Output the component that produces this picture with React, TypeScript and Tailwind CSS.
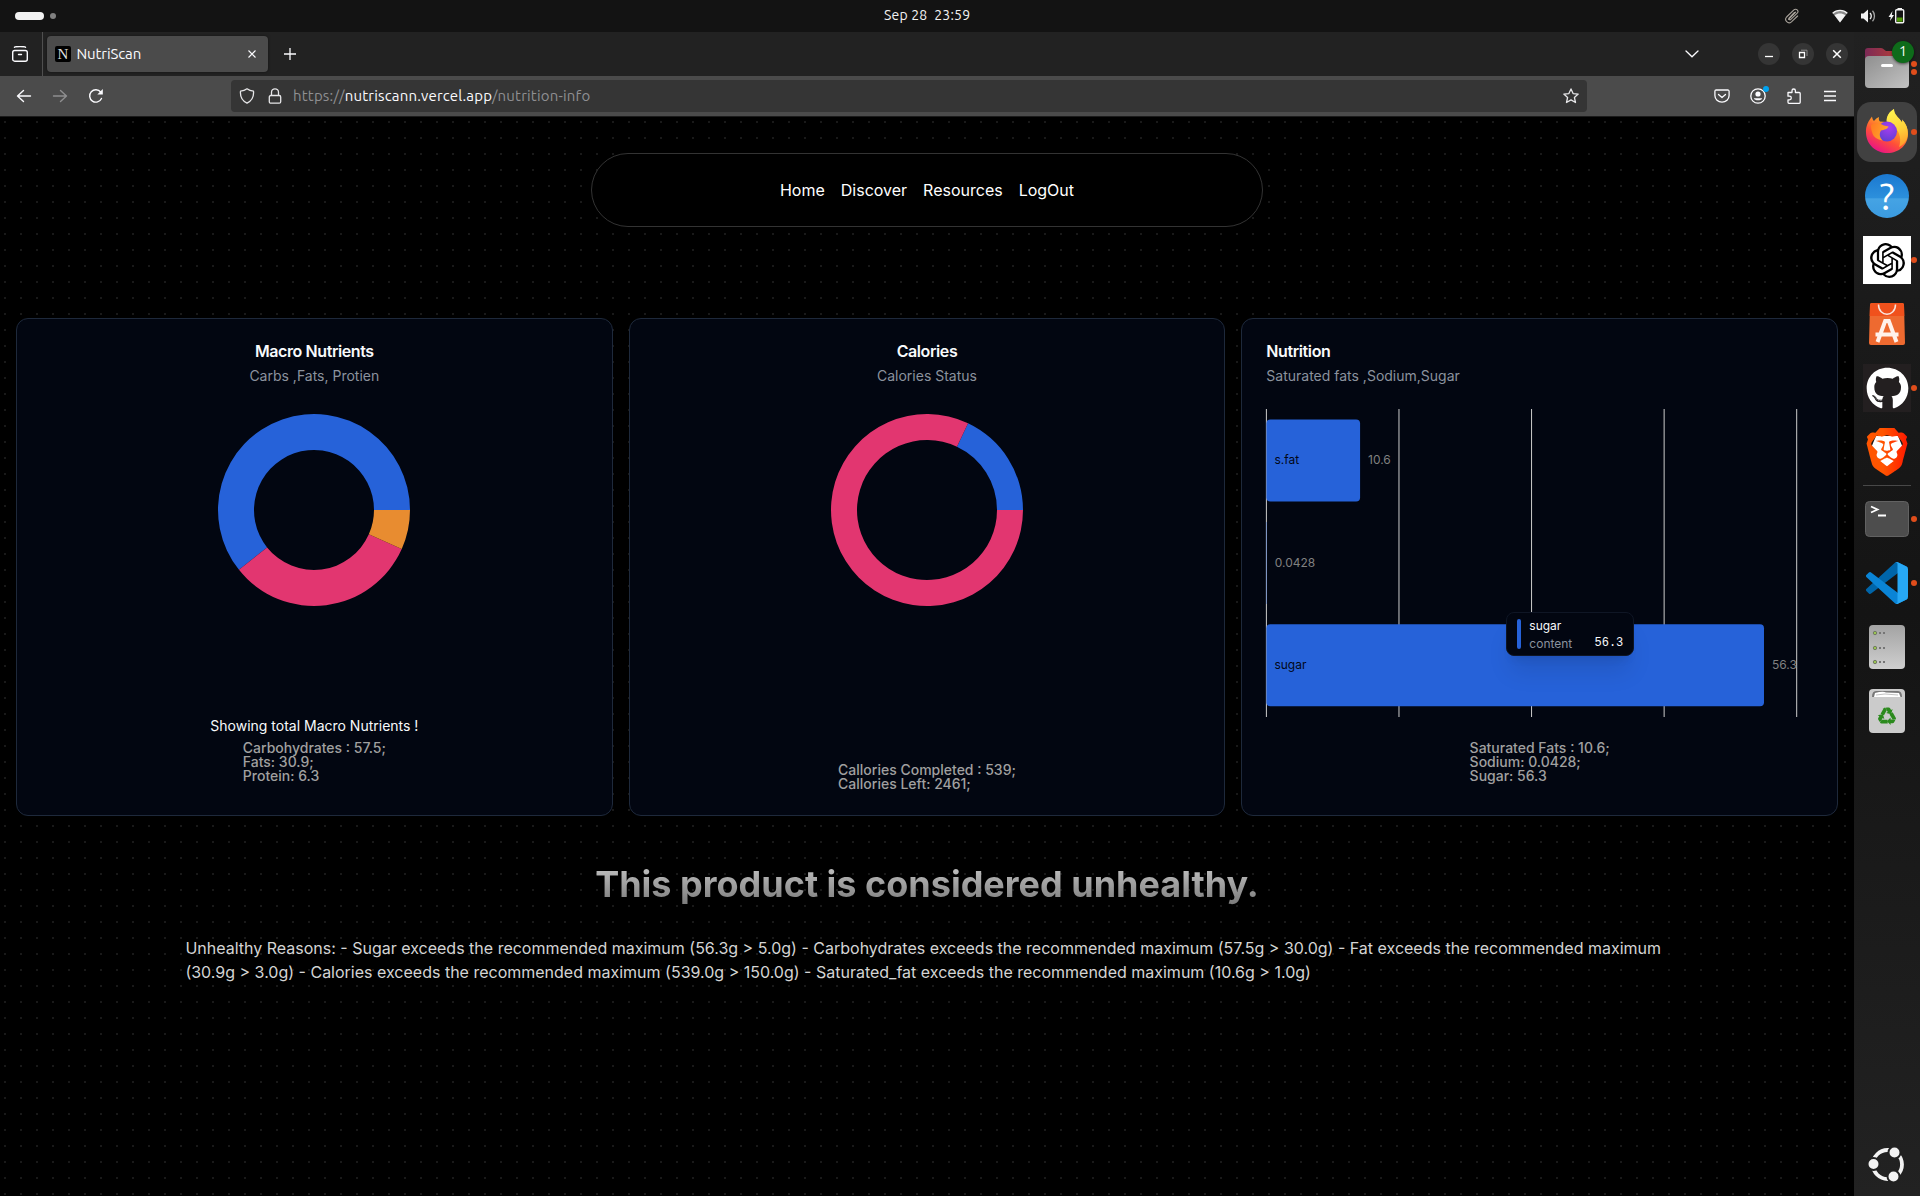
import type { ReactNode } from "react";
import { SiBrave, SiOpenai } from "react-icons/si";
import { FaGithub } from "react-icons/fa";

const UI = "font-['Ubuntu','Noto_Sans',sans-serif]";

function TopBar() {
  return (
    <header className={`relative flex h-8 shrink-0 items-center bg-[#131313] pl-[15px] text-[#f2f2f2] ${UI}`}>
      <span className="h-2 w-[29px] rounded-full bg-[#f2f2f2]" />
      <span className="ml-1.5 size-1.5 rounded-full bg-[#808080]" />
      <span className="ml-[828px] w-[90px] whitespace-pre text-[14px] leading-8 tracking-[0.2px] -translate-y-px">Sep 28  23:59</span>
      <div className="ml-auto flex items-center pr-[15px]">
        <svg width="16" height="16" viewBox="0 0 16 16" fill="none" stroke="#a9a39b" strokeWidth="1.100" strokeLinecap="round" className="mr-8">
          <path d="M10.500 4.500 5.200 9.800a1.100 1.100 0 0 0 1.600 1.600l6.400-6.200a2.300 2.300 0 0 0-3.300-3.300L2.600 9a3.400 3.400 0 0 0 4.800 4.800L13.600 8" />
          <path d="M4.600 11.400 11.600 4.200" />
        </svg>
        <svg width="16" height="16" viewBox="0 0 16 16" className="mr-3">
          <path d="M8 14.500.5 5C4.500 1.300 11.500 1.300 15.500 5Z" fill="#8a8a8a" />
          <path d="M.7 5.200C4.600 1.400 11.400 1.400 15.300 5.200" fill="none" stroke="#f2f2f2" strokeWidth="1.200" />
          <path d="M8 14.500 2.600 7.300C5.500 5 10.500 5 13.400 7.300Z" fill="#f2f2f2" />
        </svg>
        <svg width="16" height="16" viewBox="0 0 16 16" className="mr-3" fill="none" stroke="#f2f2f2" strokeWidth="1.300">
          <path d="M1 5.500h2.500L8 1.500v13L3.500 10.500H1Z" fill="#f2f2f2" stroke="none" />
          <path d="M10 5a4.200 4.200 0 0 1 0 6" />
          <path d="M12.500 2.800a7.800 7.800 0 0 1 0 10.400" stroke="#a5a5a5" />
        </svg>
        <svg width="17" height="16" viewBox="0 0 17 16">
          <path d="M4.500 3 .5 9h2.300L2 13l4-6H3.800Z" fill="#f2f2f2" />
          <rect x="7.700" y="1.700" width="8" height="13" rx="1" fill="none" stroke="#f2f2f2" strokeWidth="1.400" />
          <path d="M9.500 0h4.500v2H9.500Z" fill="#f2f2f2" />
          <path d="M9 9.500h5.500v4.200H9Z" fill="#4e9a06" />
        </svg>
      </div>
    </header>
  );
}

function WindowButton({ children }: { children: ReactNode }) {
  return (
    <span className="flex size-[22px] items-center justify-center rounded-full bg-[#353535]">
      <svg width="14" height="14" viewBox="0 0 14 14" fill="none" stroke="#fff" strokeWidth="1.300">
        {children}
      </svg>
    </span>
  );
}

function TabStrip() {
  return (
    <div className={`flex h-11 shrink-0 items-center bg-[#222222] text-[#fbfbfe] ${UI}`}>
      <svg width="16" height="16" viewBox="0 0 16 16" fill="none" stroke="#fbfbfe" strokeWidth="1.400" strokeLinecap="round" className="ml-3">
        <rect x=".7" y="4.500" width="14.600" height="10.700" rx="2" />
        <path d="M2.500 1.200C3.500.3 12.500.3 13.500 1.200M6.500 8.500h3" />
      </svg>
      <div className="ml-3.5 h-11 w-px bg-[#4f4f4f]" />
      <div className="ml-1 flex h-9 w-[221px] items-center rounded bg-[#4b4b4b] pl-2 shadow-[0_0_3px_rgba(0,0,0,0.5)]">
        <span className="flex size-4 items-center justify-center rounded-[2px] bg-black font-['Liberation_Serif',serif] text-[15px] leading-4 text-[#dddddd]">N</span>
        <span className="ml-[5.500px] flex-1 text-[15px] leading-5 tracking-[-0.1px]">NutriScan</span>
        <svg width="8" height="8" viewBox="0 0 8 8" stroke="#fbfbfe" strokeWidth="1.100" className="mr-3">
          <path d="M.5.5l7 7M7.500.5l-7 7" />
        </svg>
      </div>
      <svg width="12" height="12" viewBox="0 0 12 12" stroke="#fbfbfe" strokeWidth="1.300" className="ml-[15.500px]">
        <path d="M6 0v12M0 6h12" />
      </svg>
      <svg width="14" height="8" viewBox="0 0 14 8" fill="none" stroke="#fbfbfe" strokeWidth="1.300" strokeLinecap="round" className="ml-auto mr-[59px]">
        <path d="M1 1l6 5.800L13 1" />
      </svg>
      <div className="flex gap-3 pr-1.5">
        <WindowButton><path d="M3 9.500h8" /></WindowButton>
        <WindowButton>
          <path d="M3.500 5.500h5v5h-5Z" />
          <path d="M5 3.200h6V9" stroke="#8a8a8a" strokeWidth="1" />
        </WindowButton>
        <WindowButton><path d="M3.200 3.200l7.600 7.600M10.800 3.200l-7.600 7.600" strokeWidth="1.500" /></WindowButton>
      </div>
    </div>
  );
}

function AddressBar() {
  return (
    <div className={`flex h-[41px] shrink-0 items-center border-b border-[#1b1b1b] bg-[#4b4b4b] text-[#fbfbfe] ${UI}`}>
      <div className="flex w-[231px] items-center gap-5 pl-4">
        <svg width="16" height="16" viewBox="0 0 16 16" fill="none" stroke="#fbfbfe" strokeWidth="1.400" strokeLinecap="round" strokeLinejoin="round">
          <path d="M14.500 8H1.500M7.500 2.500 1.500 8l6 5.500" />
        </svg>
        <svg width="16" height="16" viewBox="0 0 16 16" fill="none" stroke="#8f8f90" strokeWidth="1.400" strokeLinecap="round" strokeLinejoin="round">
          <path d="M1.500 8h13M8.500 2.500l6 5.500-6 5.500" />
        </svg>
        <svg width="16" height="16" viewBox="0 0 16 16" fill="none" stroke="#fbfbfe" strokeWidth="1.400" strokeLinecap="round">
          <path d="M13.500 10.500A6.200 6.200 0 1 1 12.700 4" />
          <path d="M14.800 1v5.500H9.300Z" fill="#fbfbfe" stroke="none" />
        </svg>
      </div>
      <div className="flex h-8 w-[1356px] items-center rounded bg-[#353535] px-2">
        <svg width="16" height="16" viewBox="0 0 16 16" fill="none" stroke="#e6e6e8" strokeWidth="1.300" strokeLinejoin="round">
          <path d="M8 .8C6 2.300 3.500 3 1.500 3.200 1 8.500 3.500 13 8 15.200c4.500-2.200 7-6.700 6.500-12C12.500 3 10 2.300 8 .8Z" />
        </svg>
        <svg width="16" height="16" viewBox="0 0 16 16" fill="none" stroke="#e6e6e8" strokeWidth="1.300" className="ml-3">
          <rect x="2.300" y="7.500" width="11.400" height="7.700" rx="1.500" />
          <path d="M4.500 7.500V4.300a3.500 3.500 0 0 1 7 0v3.200" />
        </svg>
        <span className="ml-2.5 text-[15px] leading-5 tracking-[0.18px] text-[#8f8f92]">
          https://<span className="text-[#fbfbfe]">nutriscann.vercel.app</span>/nutrition-info
        </span>
        <svg width="16" height="16" viewBox="0 0 16 16" fill="none" stroke="#e6e6e8" strokeWidth="1.300" strokeLinejoin="round" className="ml-auto">
          <path d="M8 .9l2.100 4.700 5.100.5-3.800 3.400 1.100 5L8 11.900l-4.500 2.600 1.100-5L.8 6.100l5.100-.5Z" />
        </svg>
      </div>
      <div className="ml-auto flex items-center gap-5 pr-4">
        <svg width="16" height="16" viewBox="0 0 16 16" fill="none" stroke="#fbfbfe" strokeWidth="1.300" strokeLinecap="round" strokeLinejoin="round">
          <path d="M2.200 2h11.600a1.300 1.300 0 0 1 1.300 1.300V7.500a7.100 6.700 0 0 1-14.200 0V3.300A1.300 1.300 0 0 1 2.200 2ZM4.500 6.500 8 9.500l3.500-3" />
        </svg>
        <span className="relative">
          <svg width="16" height="16" viewBox="0 0 16 16" fill="none" stroke="#fbfbfe" strokeWidth="1.300">
            <circle cx="8" cy="8" r="7.200" />
            <circle cx="8" cy="6" r="2.600" fill="#fbfbfe" stroke="none" />
            <path d="M3.800 10.300h8.400C11.500 13 4.500 13 3.800 10.300Z" fill="#fbfbfe" stroke="none" />
          </svg>
          <span className="absolute -top-0.5 left-[13px] size-1.5 rounded-full bg-[#00a3f0]" />
        </span>
        <svg width="16" height="16" viewBox="0 0 16 16" fill="none" stroke="#fbfbfe" strokeWidth="1.300" strokeLinejoin="round">
          <path d="M2 4.500h4V2.700a1.700 1.700 0 0 1 3.400 0v1.800h3.800a1 1 0 0 1 1 1v8.800a1 1 0 0 1-1 1H3a1 1 0 0 1-1-1v-2.500h1.500a1.800 1.800 0 0 0 0-3.600H2Z" />
        </svg>
        <svg width="16" height="16" viewBox="0 0 16 16" stroke="#fbfbfe" strokeWidth="1.300">
          <path d="M2 3.500h12M2 8h12M2 12.500h12" />
        </svg>
      </div>
    </div>
  );
}

type Slice = { value: number; color: string };

function Donut({ slices, inner }: { slices: Slice[]; inner: number }) {
  const total = slices.reduce((sum, s) => sum + s.value, 0);
  const point = (r: number, a: number) => `${125 + r * Math.cos(a)} ${125 - r * Math.sin(a)}`;
  let angle = 0;
  return (
    <svg width="250" height="250" viewBox="0 0 250 250" className="mx-auto">
      {slices.map((s) => {
        const start = angle;
        angle += (s.value / total) * Math.PI * 2;
        const large = angle - start > Math.PI ? 1 : 0;
        return (
          <path
            key={s.color}
            fill={s.color}
            d={`M${point(96, start)}A96 96 0 ${large} 0 ${point(96, angle)}L${point(inner, angle)}A${inner} ${inner} 0 ${large} 1 ${point(inner, start)}Z`}
          />
        );
      })}
    </svg>
  );
}

function Card({ title, subtitle, left, children }: { title: string; subtitle: string; left?: boolean; children: ReactNode }) {
  return (
    <section className="flex h-[498px] flex-col rounded-xl border border-[#1e293b] bg-[#020611] p-6">
      <div className={left ? "" : "text-center"}>
        <h3 className="text-base leading-none font-semibold tracking-tight text-[#f8fafc]">{title}</h3>
        <p className="mt-[7px] -mb-px text-sm text-[#8b929e]">{subtitle}</p>
      </div>
      {children}
    </section>
  );
}

const BARS = [
  { name: "s.fat", value: 10.6, top: 10.4, baseline: 55 },
  { name: "", value: 0.0428, top: 113, baseline: 158 },
  { name: "sugar", value: 56.3, top: 215.2, baseline: 260 },
];

function NutritionChart() {
  const width = 530.3;
  return (
    <div className="relative mt-6">
      <svg width="546" height="308" viewBox="-0.400 0 546 308" className="overflow-visible font-['Inter',sans-serif] text-xs">
        {[0, 1, 2, 3, 4].map((i) => (
          <path key={i} d={`M${(width / 4) * i} 0v308`} stroke="#ccc" strokeWidth="1" />
        ))}
        {BARS.map((b) => {
          const w = (b.value / 60) * width;
          return (
            <g key={b.value}>
              <rect x="0" y={b.top} width={w} height="82" rx={w > 8 ? 4 : 0} fill="#2662d9" />
              <text x="8" y={b.baseline} fill="#020817">{b.name}</text>
              <text x={w + 8} y={b.baseline} fill="#808080">{b.value}</text>
            </g>
          );
        })}
      </svg>
      <div className="absolute top-[203px] left-[240px] flex h-11 w-32 gap-2 rounded-lg border border-[#0f1625] bg-[#020611] px-2.5 py-1.5 text-xs shadow-xl">
        <span className="w-1 rounded-[2px] bg-[#2662d9]" />
        <div className="flex flex-1 flex-col gap-1.5 pt-px leading-none">
          <span className="text-[#f8fafc]">sugar</span>
          <span className="flex justify-between text-[#8b929e]">
            content
            <span className="-mt-px font-['Liberation_Mono',monospace] text-[#f8fafc]">56.3</span>
          </span>
        </div>
      </div>
    </div>
  );
}

function FooterLines({ lines }: { lines: string[] }) {
  return (
    <div className="mx-auto w-fit text-sm leading-none font-medium text-[#a0a0a0]">
      {lines.map((l) => (
        <p key={l}>{l}</p>
      ))}
    </div>
  );
}

function Page() {
  return (
    <main className="min-h-0 flex-1 bg-black bg-[radial-gradient(circle_at_5px_5px,#191919_1.200px,transparent_1.300px)] bg-[size:16px_16px] pt-9 font-['Inter',sans-serif]">
      <nav className="mx-auto flex h-[74px] w-[672px] items-center justify-center gap-4 rounded-full border border-[#333333] bg-black text-base text-white">
        {["Home", "Discover", "Resources", "LogOut"].map((item) => (
          <a key={item}>{item}</a>
        ))}
      </nav>
      <div className="mt-[91px] grid grid-cols-3 gap-4 px-4">
        <Card title="Macro Nutrients" subtitle="Carbs ,Fats, Protien">
          <Donut
            inner={60}
            slices={[
              { value: 57.5, color: "#2662d9" },
              { value: 30.9, color: "#e23670" },
              { value: 6.3, color: "#e88c30" },
            ]}
          />
          <p className="mt-auto mb-2 text-center text-sm leading-none text-[#f8fafc]">Showing total Macro Nutrients !</p>
          <div className="mb-2">
            <FooterLines lines={["Carbohydrates : 57.5;", "Fats: 30.9;", "Protein: 6.3"]} />
          </div>
        </Card>
        <Card title="Calories" subtitle="Calories Status">
          <Donut
            inner={70}
            slices={[
              { value: 539, color: "#2662d9" },
              { value: 2461, color: "#e23670" },
            ]}
          />
          <div className="mt-auto">
            <FooterLines lines={["Callories Completed : 539;", "Callories Left: 2461;"]} />
          </div>
        </Card>
        <Card left title="Nutrition" subtitle="Saturated fats ,Sodium,Sugar">
          <NutritionChart />
          <div className="mt-auto mb-2">
            <FooterLines lines={["Saturated Fats : 10.6;", "Sodium: 0.0428;", "Sugar: 56.3"]} />
          </div>
        </Card>
      </div>
      <h1 className="mt-8 bg-gradient-to-b from-neutral-200 to-[#606060] bg-clip-text py-4 text-center text-4xl leading-10 font-bold text-transparent">
        This product is considered unhealthy.
      </h1>
      <p className="mt-4 ml-[185.400px] w-[1483px] text-base text-[#d4d4d4]">
        Unhealthy Reasons: - Sugar exceeds the recommended maximum (56.3g &gt; 5.0g) - Carbohydrates exceeds the recommended maximum (57.5g &gt; 30.0g) - Fat exceeds the recommended maximum
        <br />
        (30.9g &gt; 3.0g) - Calories exceeds the recommended maximum (539.0g &gt; 150.0g) - Saturated_fat exceeds the recommended maximum (10.6g &gt; 1.0g)
      </p>
    </main>
  );
}

function DockItem({ dots = 0, active, children }: { dots?: number; active?: boolean; children: ReactNode }) {
  return (
    <div className={`relative mx-[3px] flex h-[60px] items-center justify-center ${active ? "rounded-[14px] bg-[#414141]" : ""}`}>
      {children}
      <span className="absolute top-0 right-0 flex h-full flex-col items-center justify-center gap-0.5">
        {Array.from({ length: dots }, (_, i) => (
          <span key={i} className="size-1.5 rounded-full bg-[#e04d1b]" />
        ))}
      </span>
    </div>
  );
}

function FirefoxIcon() {
  return (
    <svg width="48" height="48" viewBox="0 0 48 48">
      <defs>
        <linearGradient id="foxBody" x1=".8" y1=".1" x2=".3" y2="1"><stop stopColor="#ffd43a" /><stop offset=".35" stopColor="#ff9a28" /><stop offset=".65" stopColor="#ff4f38" /><stop offset="1" stopColor="#e8108a" /></linearGradient>
        <linearGradient id="foxFlame" x1=".4" y1="0" x2=".6" y2="1"><stop stopColor="#fff44f" /><stop offset=".55" stopColor="#ffd23a" /><stop offset="1" stopColor="#ff9c2a" /></linearGradient>
        <radialGradient id="foxGlobe" cx=".6" cy=".3" r=".8"><stop stopColor="#a63df0" /><stop offset="1" stopColor="#5a3fcf" /></radialGradient>
        <linearGradient id="foxHead" x1="0" y1="0" x2="1" y2=".4"><stop stopColor="#ff7a22" /><stop offset="1" stopColor="#ffa62b" /></linearGradient>
      </defs>
      <path fill="url(#foxBody)" d="M3 25C2.500 18 5.500 13 9 8.500 9.300 10.800 10 12.300 11 13c1.500-2 3-3.200 5-4-.5 2 0 3.500 1 4.500L24 14C24 8 26 4 31 1c0 5 3 7 5.500 10 1.500 2 2 2.500 2.500 3.500.5-1 .3-2 0-3C43 15.500 45 20 45 26c0 11-9 19-20.500 19S3.500 37 3 25Z" />
      <path fill="url(#foxFlame)" d="M31 1c0 5 3 7 5.500 10 1.500 2 2 2.500 2.500 3.500.5-1 .3-2 0-3 5.500 6 7 13 4.500 20-2 4-4.500 6-7.500 7.500 2.500-7 1-14-3.500-19C29 16.500 24 16 23.500 13 23.700 8 26 4 31 1Z" />
      <circle cx="24" cy="23.500" r="10" fill="url(#foxGlobe)" />
      <path fill="url(#foxHead)" d="M8 17c4.500-2.500 10-1.500 13 .5l4.500 1c-.5 2.500-4.500 3.300-7.500 4-2 3-1.500 7 1.500 10-5-1-9-3.500-10-7C8.500 23 8 20.500 8 17Z" />
    </svg>
  );
}

function RecycleGlyph() {
  return (
    <g transform="translate(24 29.500)" fill="#2b8a1d">
      {[0, 120, 240].map((turn) => (
        <g key={turn} transform={`rotate(${turn})`}>
          <path d="M-6.400-2.800-3.300-8.200q.6-.9 1.600-.9L-.2-6.300-3-1.200Z" />
          <path d="M-.8-9.100h2.600q.8 0 1.300.8l1 1.800L5.600-7.400 4.200-2.300-.9-3.600l1.700-1L-1-7.600Z" />
        </g>
      ))}
    </g>
  );
}

function Dock() {
  return (
    <aside className="flex w-[66px] shrink-0 flex-col bg-gradient-to-b from-[#212121] via-[#141414] to-[#222222] pt-1.5">
      <div className="flex flex-col gap-1">
        <DockItem dots={2}>
          <svg width="48" height="48" viewBox="0 0 48 48">
            <defs>
              <linearGradient id="folder" x1="0" y1="0" x2="1" y2="1"><stop stopColor="#8f8f8f" /><stop offset="1" stopColor="#c2c2c2" /></linearGradient>
              <linearGradient id="folderBack" x1="0" y1="0" x2="1" y2="0"><stop stopColor="#7c2a56" /><stop offset="1" stopColor="#c8452f" /></linearGradient>
            </defs>
            <path d="M2 20V7q0-3 3-3h13q2 0 3 1.500L23 7h20q3 0 3 3v10Z" fill="url(#folderBack)" />
            <rect x="2" y="12" width="44" height="32" rx="4" fill="url(#folder)" />
            <rect x="18" y="20" width="12" height="3" rx="1.500" fill="#fff" />
          </svg>
          <span className="absolute top-[3px] right-[3px] flex size-[22px] items-center justify-center rounded-full bg-[#0e6b1a] pb-px font-['Ubuntu','Noto_Sans',sans-serif] text-[14px] text-white shadow-[0_1px_3px_rgba(0,0,0,0.6)]">1</span>
        </DockItem>
        <DockItem dots={1} active>
          <FirefoxIcon />
        </DockItem>
        <DockItem>
          <span className="flex size-[44px] items-center justify-center rounded-full bg-[linear-gradient(#1b78d0_0%,#2c90dc_55%,#45a3e4_56%,#3b9be0_100%)] font-['Ubuntu','Noto_Sans',sans-serif] text-[38px] leading-none text-white">?</span>
        </DockItem>
        <DockItem dots={1}>
          <span className="flex size-12 items-center justify-center bg-white text-black"><SiOpenai size={35} /></span>
        </DockItem>
        <DockItem>
          <svg width="48" height="48" viewBox="0 0 48 48">
            <path d="M9 3h30q2 0 2 2l1 38q0 2-2 2H8q-2 0-2-2L7 5q0-2 2-2Z" fill="#ee6a30" />
            <path d="M9 3h30q2 0 2 2l.3 11H6.700L7 5q0-2 2-2Z" fill="#f0511c" />
            <path d="M15.500 4.500c0 13 17 13 17 0" fill="none" stroke="#f8e6df" strokeWidth="1.500" />
            <path d="M14.500 42 22.200 21h3.600L33.500 42M12.500 34.500h23" fill="none" stroke="#fff1ea" strokeWidth="4" />
          </svg>
        </DockItem>
        <DockItem dots={1}>
          <span className="flex size-12 items-center justify-center bg-[#231f20] text-white"><FaGithub size={43} /></span>
        </DockItem>
        <DockItem>
          <svg width="48" height="48" viewBox="0 0 48 48">
            <defs>
              <linearGradient id="brave" x1="0" x2="1"><stop stopColor="#ff5500" /><stop offset=".4" stopColor="#ff5500" /><stop offset="1" stopColor="#ff1a00" /></linearGradient>
            </defs>
            <path d="M13 8h22l5 12-6 18-10 6-10-6-6-18Z" fill="#fff" />
            <SiBrave size={48} fill="url(#brave)" />
          </svg>
        </DockItem>
      </div>
      <div className="mx-[9px] mt-[3px] h-px bg-[#484848]" />
      <div className="mt-[3px] flex flex-col gap-1">
        <DockItem dots={1}>
          <svg width="48" height="48" viewBox="0 0 48 48">
            <rect x="2.500" y="6.500" width="43" height="35" rx="4" fill="#4d4d4d" stroke="#626262" />
            <path d="M8 11.500l6.500 3L8 17.500M15 20.500h8" fill="none" stroke="#fff" strokeWidth="1.800" />
          </svg>
        </DockItem>
        <DockItem dots={1}>
          <svg width="42" height="42" viewBox="0 0 100 100">
            <path fill="#0065a9" d="M96.461 10.796 75.857.876a6.230 6.230 0 0 0-7.107 1.207L1.299 63.583a4.167 4.167 0 0 0 .004 6.162l5.510 5.009a4.167 4.167 0 0 0 5.321.236l81.227-61.620c2.725-2.067 6.639-.124 6.639 3.297v-.240a6.250 6.250 0 0 0-3.539-5.631Z" />
            <path fill="#0a84d6" d="m96.461 89.204-20.604 9.920a6.230 6.230 0 0 1-7.107-1.207L1.299 36.417a4.167 4.167 0 0 1 .004-6.162l5.510-5.009a4.167 4.167 0 0 1 5.321-.236l81.227 61.620c2.725 2.067 6.639.124 6.639-3.297v.240a6.250 6.250 0 0 1-3.539 5.631Z" />
            <path fill="#27a8f5" d="M75.858 99.126a6.230 6.230 0 0 1-7.108-1.210C71.056 100.223 75 98.590 75 95.328V4.672c0-3.262-3.944-4.895-6.250-2.589a6.230 6.230 0 0 1 7.108-1.210l20.601 9.908A6.250 6.250 0 0 1 100 16.413v67.174a6.250 6.250 0 0 1-3.541 5.632Z" />
          </svg>
        </DockItem>
        <DockItem>
          <svg width="48" height="48" viewBox="0 0 48 48">
            <defs>
              <linearGradient id="metal" x1="0" y1="0" x2="0" y2="1"><stop stopColor="#a3a3a3" /><stop offset="1" stopColor="#cfcfcf" /></linearGradient>
            </defs>
            <rect x="6" y="2" width="36" height="44" rx="4" fill="url(#metal)" />
            {[10, 25, 39].map((y) => (
              <g key={y} fill="#757575">
                <circle cx="12" cy={y} r="1.700" fill="#9bc552" stroke="#6c7460" strokeWidth=".9" />
                <rect x="16" y={y - 1} width="2" height="2" />
                <rect x="20" y={y - 1} width="2" height="2" />
              </g>
            ))}
          </svg>
        </DockItem>
        <DockItem>
          <svg width="48" height="48" viewBox="0 0 48 48">
            <rect x="6" y="2" width="36" height="44" rx="4" fill="#cbcbcb" />
            <path d="M9 10q0-6 4-6h22q4 0 4 6Z" fill="#777" />
            <path d="M11 10l1-4q8-2 11-.5L36 6l1.500 4Z" fill="#fff" />
            <path d="M13 8l9-1 13 1" fill="none" stroke="#999" strokeWidth=".6" />
            <RecycleGlyph />
          </svg>
        </DockItem>
      </div>
      <svg width="40" height="40" viewBox="0 0 40 40" className="mt-auto mb-3 ml-3.5">
        <circle cx="19.500" cy="20.500" r="14.500" fill="none" stroke="#f2f2f2" strokeWidth="3.800" />
        {[[5.500, 20], [26.500, 8.500], [25.500, 32.500]].map(([cx, cy]) => (
          <circle key={cx} cx={cx} cy={cy} r="6" fill="#f2f2f2" stroke="#212121" strokeWidth="2" />
        ))}
      </svg>
    </aside>
  );
}

export default function App() {
  return (
    <div className="flex h-[1196px] w-[1920px] flex-col overflow-hidden bg-black">
      <TopBar />
      <div className="flex min-h-0 flex-1">
        <div className="flex w-[1854px] flex-col">
          <TabStrip />
          <AddressBar />
          <Page />
        </div>
        <Dock />
      </div>
    </div>
  );
}
